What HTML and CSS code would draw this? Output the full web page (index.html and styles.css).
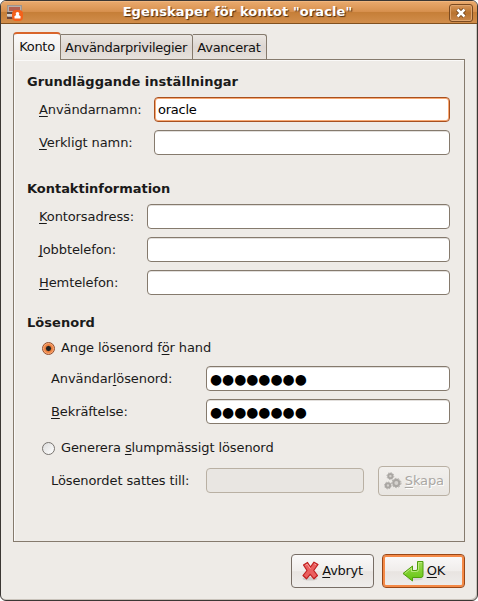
FILE: index.html
```html
<!DOCTYPE html>
<html lang="sv">
<head>
<meta charset="UTF-8">
<meta name="viewport" content="width=device-width, initial-scale=1.0">
<title>Egenskaper för kontot "oracle"</title>
<link rel="stylesheet" href="styles.css">
</head>
<body>

<div class="window">
    <div class="titlebar">
        <svg class="app-icon" width="16" height="16" viewBox="0 0 16 16">
            <rect x="0.5" y="0.5" width="14" height="12" fill="#b9aea7" stroke="#a0958e"/>
            <rect x="2" y="2" width="11" height="4" fill="#b5604f"/>
            <rect x="0" y="7" width="6" height="2" fill="#5c4c45"/>
            <rect x="0" y="9" width="6" height="2" fill="#d8d0cb"/>
            <rect x="0" y="12" width="7" height="2" fill="#6d4639"/>
            <rect x="5" y="5" width="11" height="11" rx="4" fill="#f4611a"/>
            <circle cx="10.5" cy="8.7" r="1.8" fill="#fff"/>
            <path d="M7.5 13.5v-2l1.500-1.500h3l1.500 1.500v2z" fill="#fff"/>
        </svg>
        <div class="title">Egenskaper för kontot "oracle"</div>
        <button class="close" aria-label="Stäng">
            <svg width="10" height="10" viewBox="0 0 10 10">
                <path d="M1.5 1.5l7 7M8.5 1.5l-7 7" stroke="#6b3c12" stroke-width="4.2"/>
                <path d="M1.5 1.5l7 7M8.5 1.5l-7 7" stroke="#fff" stroke-width="2.6"/>
            </svg>
        </button>
    </div>

    <div class="content">
        <div class="tabs">
            <div class="tab active">Konto</div>
            <div class="tab privileges">Användarprivilegier</div>
            <div class="tab advanced">Avancerat</div>
        </div>

        <div class="panel">
            <h2>Grundläggande inställningar</h2>
            <div class="row basic">
                <label for="username"><u>A</u>nvändarnamn:</label>
                <input class="focused" type="text" id="username" value="oracle">
            </div>
            <div class="row basic">
                <label for="realname"><u>V</u>erkligt namn:</label>
                <input type="text" id="realname">
            </div>

            <h2 class="contact-title">Kontaktinformation</h2>
            <div class="row contact">
                <label for="office"><u>K</u>ontorsadress:</label>
                <input type="text" id="office">
            </div>
            <div class="row contact">
                <label for="work"><u>J</u>obbtelefon:</label>
                <input type="text" id="work">
            </div>
            <div class="row contact">
                <label for="home"><u>H</u>emtelefon:</label>
                <input type="text" id="home">
            </div>

            <h2 class="password-title">Lösenord</h2>
            <div class="option">
                <span class="radio checked"></span>
                <span>Ange lösenord f<u>ö</u>r hand</span>
            </div>
            <div class="row password">
                <label for="password">Användar<u>l</u>ösenord:</label>
                <input class="dots" type="text" id="password" value="●●●●●●●●">
            </div>
            <div class="row password">
                <label for="confirm"><u>B</u>ekräftelse:</label>
                <input class="dots" type="text" id="confirm" value="●●●●●●●●">
            </div>
            <div class="option random">
                <span class="radio"></span>
                <span>Generera <u>s</u>lumpmässigt lösenord</span>
            </div>
            <div class="row generated">
                <label for="generated">Lösenordet sattes till:</label>
                <input type="text" id="generated" disabled>
                <button class="create" disabled>
                    <svg width="18" height="18" viewBox="0 0 18 18" fill="none" stroke="#aaa7a3">
                        <circle cx="6.5" cy="4" r="2.2" stroke-width="2" fill="#d5d2ce"/>
                        <circle cx="6.5" cy="4" r="3.5" stroke-width="0.8" stroke-dasharray="1.4 1.3"/>
                        <circle cx="4" cy="13.5" r="2.2" stroke-width="2" fill="#d5d2ce"/>
                        <circle cx="4" cy="13.5" r="3.5" stroke-width="0.8" stroke-dasharray="1.4 1.3"/>
                        <circle cx="12.5" cy="11" r="3.1" stroke-width="2.2" fill="#d5d2ce"/>
                        <circle cx="12.5" cy="11" r="4.7" stroke-dasharray="1.8 1.5"/>
                    </svg>
                    <span><u>S</u>kapa</span>
                </button>
            </div>
        </div>

        <div class="actions">
            <button class="action cancel">
                <svg width="17" height="20" viewBox="0 0 17 20">
                    <ellipse cx="8" cy="17.8" rx="7.5" ry="1.8" fill="#000" opacity="0.12"/>
                    <path d="M1.5 4L5.5 1.5l3 4.500L12 1.200l4 2.300-4.300 6 3.800 5-3.500 3.300-3.800-4.500-3.700 4.500L1 14.500l4-5z" fill="#ea5f5f" stroke="#c01f1f" stroke-width="1.2" stroke-linejoin="round"/>
                    <path d="M3.5 4.300l1.700-1.100 3.300 4.600M12.300 2.800l1.800 1.100" fill="none" stroke="#f6a3a0"/>
                </svg>
                <span><u>A</u>vbryt</span>
            </button>
            <button class="action ok">
                <svg width="22" height="22" viewBox="0 0 22 22">
                    <defs>
                        <linearGradient id="arrow" x1="0" y1="0" x2="0" y2="1">
                            <stop offset="0" stop-color="#a0dc58"/>
                            <stop offset="1" stop-color="#62c40c"/>
                        </linearGradient>
                    </defs>
                    <ellipse cx="13" cy="19" rx="8" ry="1.5" fill="#000" opacity="0.08"/>
                    <path d="M15.5 1.500h5.500v14q0 2-2 2h-8.500v3.500L1 13.500l9.500-7.500v4.500h3.500q1.500 0 1.500-1.500z" fill="url(#arrow)" stroke="#4f9e0b" stroke-linejoin="round"/>
                    <path d="M20 2.500h-3.500v7q0 2-2 2h-5V8L2.800 13.400" fill="none" stroke="#c5ef8e" stroke-width="0.8"/>
                </svg>
                <span><u>O</u>K</span>
            </button>
        </div>
    </div>
</div>

</body>
</html>
```
FILE: styles.css
```css
* {
    box-sizing: border-box;
}
body {
    margin: 0;
    background-color: #fff;
    font-family: "DejaVu Sans", sans-serif;
    font-size: 13px;
    line-height: 16px;
    letter-spacing: -0.1px;
    color: #1a1a1a;
}
u {
    text-underline-offset: 2px;
    text-decoration-thickness: 1px;
    text-decoration-skip-ink: none;
}
.window {
    width: 478px;
    height: 601px;
    border: 1px solid #3b3734;
    border-radius: 6px;
    background-color: #eeebe7;
    box-shadow: inset -1px -1px 0 #c9c3bb;
    overflow: hidden;
}
.titlebar {
    display: flex;
    align-items: center;
    height: 23px;
    padding: 0 4px 0 6px;
    border-top: 1px solid #f0b67e;
    border-bottom: 1px solid #80501f;
    background: linear-gradient(#e8a86b, #d8914f 45%, #c67f38 50%, #d18d4b);
}
.title {
    flex: 1;
    padding: 0 0 1px 3px;
    text-align: center;
    font-weight: bold;
    letter-spacing: 0.09px;
    color: #fff;
    text-shadow: 1px 1px 1px #4a2b10;
}
.close {
    display: flex;
    align-items: center;
    justify-content: center;
    width: 24px;
    height: 18px;
    padding: 0;
    border: 1px solid #7b4a20;
    border-radius: 3px;
    background: linear-gradient(#d9975a, #b87330 50%, #c9874a);
    box-shadow: inset 0 0 0 1px #dfa56e;
}
.content {
    padding: 8px 12px 0;
}
.tabs {
    display: flex;
    align-items: flex-end;
    height: 27px;
}
.tab {
    height: 25px;
    border: 1px solid #857a6d;
    border-left: none;
    border-bottom: none;
    border-radius: 0 3px 0 0;
    background: linear-gradient(#ebe7e3, #ddd6d1 50%, #e7e2dd);
    line-height: 25px;
    text-align: center;
    white-space: nowrap;
    color: #111;
}
.tab.active {
    width: 48px;
    height: 28px;
    margin-bottom: -1px;
    border-left: 1px solid #857a6d;
    border-top: 2px solid #d9652b;
    border-radius: 4px 4px 0 0;
    background: linear-gradient(#fbfafa, #eeebe7);
    letter-spacing: -0.3px;
    z-index: 1;
}
.privileges {
    width: 132px;
    padding-right: 1px;
    letter-spacing: -0.32px;
}
.advanced {
    width: 74px;
    padding-right: 1px;
    letter-spacing: -0.25px;
}
.panel {
    height: 483px;
    width: 452px;
    padding: 14px 14px 0 13px;
    border: 1px solid #857a6d;
    box-shadow: inset 1px 1px 0 #faf9f8;
}
h2 {
    margin: 0 0 7px;
    font-size: 13px;
    line-height: 16px;
    letter-spacing: 0.03px;
}
.contact-title {
    margin-top: 25px;
    letter-spacing: -0.03px;
}
.password-title {
    margin-top: 19px;
}
.row {
    display: flex;
    align-items: flex-start;
    height: 26px;
    margin-bottom: 7px;
    padding-left: 12px;
    line-height: 26px;
}
.row input {
    flex: 1;
    min-width: 0;
    height: 25px;
    padding: 0 3px;
    border: 1px solid #857a6d;
    border-radius: 4px;
    background-color: #fff;
    box-shadow: inset 0 1px 0 #e2dfdc;
    font: inherit;
    line-height: 16px;
    letter-spacing: -0.25px;
    color: #000;
    outline: none;
}
.row input.focused {
    border-color: #a8501f;
    box-shadow: inset 0 0 0 1px #f7a873;
}
.row input.dots {
    font-size: 13.9px;
    letter-spacing: -0.03px;
}
.row input:disabled {
    flex: none;
    width: 158px;
    border-color: #b9b0a3;
    background-color: #e9e6e2;
    box-shadow: none;
}
.basic label {
    width: 115px;
}
.contact label {
    width: 108px;
}
.password,
.generated {
    padding-left: 24px;
}
.password label,
.generated label {
    width: 155px;
}
.option {
    display: flex;
    align-items: center;
    height: 20px;
    margin-bottom: 8px;
    padding-left: 15px;
}
.option.random {
    margin: 13px 0 10px;
}
.radio {
    width: 13px;
    height: 13px;
    margin-right: 6px;
    border: 1px solid #77736f;
    border-radius: 50%;
    background: linear-gradient(135deg, #dcdcdc, #fff);
}
.radio.checked {
    border-color: #924d2b;
    background: radial-gradient(circle, #222 0 2px, #ef8544 3.2px 4px, #ffb688 5.5px);
}
button {
    font: inherit;
    letter-spacing: inherit;
    color: #111;
}
.create {
    display: flex;
    align-items: center;
    gap: 3px;
    width: 72px;
    height: 30px;
    margin: -2px 0 0 14px;
    padding: 0 5px;
    border: 1px solid #b9b0a3;
    border-radius: 4px;
    background: linear-gradient(#f2f0ed, #e9e6e2);
    color: #aaa7a3;
    text-shadow: 1px 1px 0 #fff;
}
.actions {
    display: flex;
    gap: 8px;
    margin-top: 12px;
}
.action {
    display: flex;
    align-items: center;
    justify-content: center;
    gap: 3px;
    width: 83px;
    height: 34px;
    padding: 0;
    border: 1px solid #776d65;
    border-radius: 4px;
    background: linear-gradient(#faf9f9, #f0edeb 50%, #e8e4e1 52%, #efedeb);
}
.cancel {
    margin-left: 278px;
    letter-spacing: -0.3px;
}
.ok {
    border-color: #994717;
    box-shadow: inset 0 0 0 2px #f58a47;
}
```
